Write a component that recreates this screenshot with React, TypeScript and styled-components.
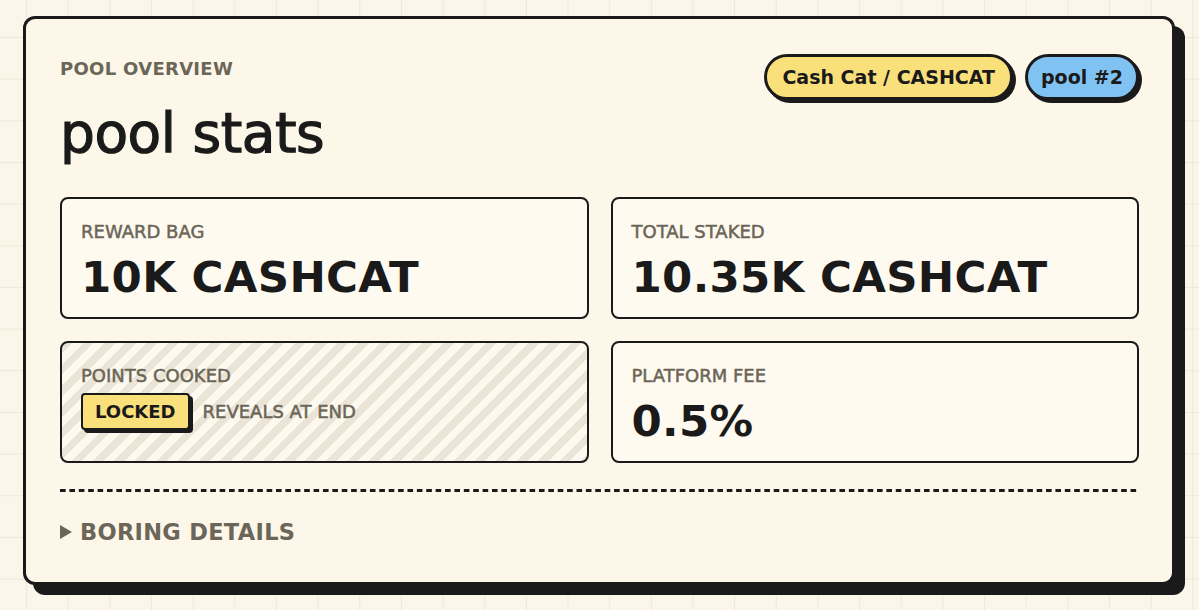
import React from 'react';
import styled, { createGlobalStyle } from 'styled-components';

const GlobalStyle = createGlobalStyle`
html, body {
    margin: 0;
    padding: 0;
}
body {
    background-color: #fbf6ea;
    background-image:
        linear-gradient(to right, #efe8d8 1px, transparent 1px),
        linear-gradient(to bottom, #efe8d8 1px, transparent 1px);
    background-size: 41.67px 41.67px;
    background-position: 26px 37px;
    font-family: "DejaVu Sans", "Noto Sans", sans-serif;
    color: #1a1a1a;
    min-height: 610px;
}
`;

const Page = styled.div`
padding: 16px 0 0 23px;
`;

const Card = styled.section`
box-sizing: border-box;
width: 1152px;
height: 569px;
border: 3px solid #1a1a1a;
border-radius: 12px;
background: #fdf7ea;
box-shadow: 10px 10px 0 #1a1a1a;
padding: 38px 33px 0 34px;
display: flex;
flex-direction: column;
`;

const Header = styled.div`
display: flex;
justify-content: space-between;
align-items: flex-start;
`;

const Eyebrow = styled.div`
font-size: 18px;
font-weight: 700;
color: #6b6657;
letter-spacing: 0.3px;
line-height: 24px;
`;

const Title = styled.h1`
margin: 19px 0 0;
font-size: 55px;
font-weight: 400;
line-height: 66px;
letter-spacing: -0.5px;
-webkit-text-stroke: 1.2px #1a1a1a;
`;

const Tags = styled.div`
display: flex;
gap: 12px;
margin-top: -3px;
`;

const Tag = styled.span<{ $tone: 'yellow' | 'blue' }>`
display: inline-flex;
align-items: center;
height: 40px;
padding: 0 ${props => props.$tone === 'yellow' ? 15 : 13}px;
border: 3px solid #1a1a1a;
border-radius: 999px;
background: ${props => props.$tone === 'yellow' ? '#f9e07b' : '#80c2f2'};
box-shadow: 3px 3px 0 #1a1a1a;
font-size: 19px;
font-weight: 700;
`;

const StatGrid = styled.div`
display: grid;
grid-template-columns: 1fr 1fr;
gap: 22px;
margin-top: 31px;
`;

const StatBox = styled.div<{ $striped?: boolean }>`
box-sizing: border-box;
height: 122px;
border: 2.5px solid #1a1a1a;
border-radius: 8px;
padding: 21.5px 19px 0;
background: ${props => props.$striped
    ? 'repeating-linear-gradient(135deg, #ebe5d8 0 7.5px, #fdf9ef 7.5px 15px)'
    : '#fffaf0'};
`;

const StatLabel = styled.div`
font-size: 18px;
color: #6b6657;
line-height: 22px;
-webkit-text-stroke: 0.5px #6b6657;
`;

const StatValue = styled.div`
margin-top: 10px;
font-size: 43.5px;
font-weight: 700;
line-height: 48px;
letter-spacing: 0.3px;
`;

const LockRow = styled.div`
display: flex;
align-items: center;
gap: 13px;
margin-top: 6px;
`;

const LockBadge = styled.span`
display: inline-flex;
align-items: center;
height: 33px;
padding: 0 12px;
border: 2.5px solid #1a1a1a;
border-radius: 4px;
background: #f9e07b;
box-shadow: 3px 3px 0 #1a1a1a;
font-size: 18px;
font-weight: 700;
`;

const LockNote = styled.span`
font-size: 18px;
color: #6b6657;
-webkit-text-stroke: 0.5px #6b6657;
`;

const Divider = styled.div`
height: 3px;
margin-top: 26px;
background-image: linear-gradient(to right, #1a1a1a 65%, transparent 65%);
background-size: 9.4px 3px;
`;

const Summary = styled.div`
display: flex;
align-items: center;
gap: 8px;
margin-top: 26px;
font-size: 22.5px;
font-weight: 700;
line-height: 28px;
color: #6b6657;
letter-spacing: 0.3px;
`;

const Caret = styled.span`
width: 0;
height: 0;
border-top: 7px solid transparent;
border-bottom: 7px solid transparent;
border-left: 12px solid #6b6657;
`;

type Stat = { label: string; value?: string; locked?: boolean };

const stats: Stat[] = [
    { label: 'REWARD BAG', value: '10K CASHCAT' },
    { label: 'TOTAL STAKED', value: '10.35K CASHCAT' },
    { label: 'POINTS COOKED', locked: true },
    { label: 'PLATFORM FEE', value: '0.5%' },
];

const App: React.FC = () => {
    return (
        <Page>
            <GlobalStyle />
            <Card>
                <Header>
                    <div>
                        <Eyebrow>POOL OVERVIEW</Eyebrow>
                        <Title>pool stats</Title>
                    </div>
                    <Tags>
                        <Tag $tone="yellow">Cash Cat / CASHCAT</Tag>
                        <Tag $tone="blue">pool #2</Tag>
                    </Tags>
                </Header>
                <StatGrid>
                    {stats.map(s => (
                        <StatBox key={s.label} $striped={s.locked}>
                            <StatLabel>{s.label}</StatLabel>
                            {s.locked
                                ? <LockRow><LockBadge>LOCKED</LockBadge><LockNote>REVEALS AT END</LockNote></LockRow>
                                : <StatValue>{s.value}</StatValue>}
                        </StatBox>
                    ))}
                </StatGrid>
                <Divider />
                <Summary><Caret />BORING DETAILS</Summary>
            </Card>
        </Page>
    );
};

export default App;
